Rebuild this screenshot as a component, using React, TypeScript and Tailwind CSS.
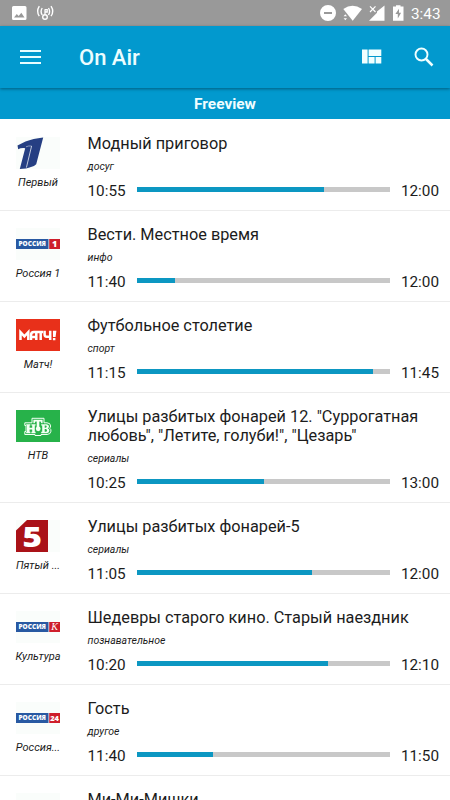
import type { ReactNode } from 'react';

type Programme = {
    channel: string;
    logo: ReactNode;
    title: string;
    genre: string;
    start: string;
    end: string;
    progress: number;
};

function RussiaLogo({ suffix, suffixClass }: { suffix: string; suffixClass: string }) {
    return (
        <div className="w-full h-full bg-[#fafdfb] flex items-center">
            <svg viewBox="0 0 44 10" className="w-11 h-[10px] overflow-visible">
                <rect width="32.5" height="10" fill="#2859a2" />
                <rect x="33.2" width="10.8" height="10" fill="#ce1e2b" />
                <text x="2.5" y="7.4" textLength="27.5" lengthAdjust="spacingAndGlyphs" fontSize="6.8" fontWeight="800" fill="#fff" fontFamily="Open Sans, sans-serif">
                    РОССИЯ
                </text>
                <text x="38.6" y="8.2" textAnchor="middle" fill="#fff" className={suffixClass}>
                    {suffix}
                </text>
            </svg>
        </div>
    );
}

function FirstLogo() {
    return (
        <svg viewBox="0 0 44 32" className="w-full h-full">
            <rect width="44" height="32" fill="#fafdfb" />
            <path d="M1.5 8.6 9.5 4.6Q17 1.5 27.2.5L20.2 27.3Q18 30 13.5 30.6L10 31.4 3.8 32 9.2 11.2Q5 10.8 2.2 12.2Z" fill="#263f83" />
            <path d="M15.6 9 10.4 30.6" fill="none" stroke="#e8edf3" strokeWidth=".8" />
            <path d="M10 9.8Q12.5 8.6 15.6 9" fill="none" stroke="#e8edf3" strokeWidth=".5" />
        </svg>
    );
}

function MatchLogo() {
    return (
        <svg viewBox="0 0 44 32" className="w-full h-full">
            <rect width="44" height="32" fill="#e8301a" />
            <g fill="none" stroke="#fff" strokeWidth="2.5">
                <path d="M4.5 21V13.2L8.4 17.4 12.3 13.2V21" />
                <path d="M15 21V16.2Q15 13 18 13H27M15 18H20.5M20.3 21V13M24.7 21V13" />
                <path d="M28.6 11.8V15.6Q28.6 17.8 30.6 17.8H34M34.2 11.8V21" />
            </g>
            <path d="M36.9 11.7H40.4L39.6 18H37ZM36.9 18.9H39.4V21.2H36.9Z" fill="#fff" />
        </svg>
    );
}

function NtvLogo() {
    return (
        <svg viewBox="0 0 44 32" className="w-full h-full">
            <rect width="44" height="32" fill="#27b24a" />
            <path d="M8.8 12.8H16V8.3H28V12.8H31Q34.6 13 34.6 16 34.6 17.3 33.6 18.2 35.2 19.2 35 21.2 34.6 24.4 31 24.5H25V25.5H19V24.5H8.8V21.5H10V15.5H8.8Z" fill="none" stroke="#f3fff4" strokeWidth="1" />
            <g fill="#f3fff4">
                <path d="M10.2 14.2H14.4V15.6H13.6V17.8H16.2V15.6H15.4V14.2H19.6V15.6H18.8V21.8H19.6V23.2H15.4V21.8H16.2V19.4H13.6V21.8H14.4V23.2H10.2V21.8H11V15.6H10.2Z" />
                <path d="M17.4 9.8H26.6V13.3H25.4L24.6 11.4H23.3V17H20.7V11.4H19.4L18.6 13.3H17.4Z" />
                <path fillRule="evenodd" d="M25.2 14.2H30.6Q33.1 14.4 33 16.4 32.9 17.8 31.7 18.3 33.5 18.8 33.4 20.8 33.2 23 30.6 23.2H25.2V21.8H26.2V15.6H25.2ZM28.7 15.6V17.7H29.7Q30.7 17.6 30.7 16.6 30.7 15.6 29.7 15.6ZM28.7 19.1V21.8H29.8Q31 21.6 31 20.4 31 19.2 29.8 19.1Z" />
                <circle cx="22.2" cy="18.8" r="2.4" />
            </g>
        </svg>
    );
}

function FiveLogo() {
    return (
        <svg viewBox="0 0 44 32" className="w-full h-full overflow-visible">
            <rect width="44" height="32" fill="#fafdfb" />
            <path d="M11 0H32V32H0V10.5Z" fill="#aa1218" />
            <text x="6.5" y="26.5" fontSize="29" textLength="19.5" lengthAdjust="spacingAndGlyphs" fontWeight="800" fill="#fff" fontFamily="Open Sans, sans-serif">
                5
            </text>
        </svg>
    );
}

const programmes: Programme[] = [
    { channel: 'Первый', logo: <FirstLogo />, title: 'Модный приговор', genre: 'досуг', start: '10:55', end: '12:00', progress: 74 },
    { channel: 'Россия 1', logo: <RussiaLogo suffix="1" suffixClass="font-['Open_Sans'] font-extrabold text-[9px]" />, title: 'Вести. Местное время', genre: 'инфо', start: '11:40', end: '12:00', progress: 15 },
    { channel: 'Матч!', logo: <MatchLogo />, title: 'Футбольное столетие', genre: 'спорт', start: '11:15', end: '11:45', progress: 93.5 },
    { channel: 'НТВ', logo: <NtvLogo />, title: 'Улицы разбитых фонарей 12. "Суррогатная любовь", "Летите, голуби!", "Цезарь"', genre: 'сериалы', start: '10:25', end: '13:00', progress: 50.3 },
    { channel: 'Пятый ...', logo: <FiveLogo />, title: 'Улицы разбитых фонарей-5', genre: 'сериалы', start: '11:05', end: '12:00', progress: 69.2 },
    { channel: 'Культура', logo: <RussiaLogo suffix="К" suffixClass="font-['Liberation_Serif'] italic text-[10px]" />, title: 'Шедевры старого кино. Старый наездник', genre: 'познавательное', start: '10:20', end: '12:10', progress: 75.6 },
    { channel: 'Россия...', logo: <RussiaLogo suffix="24" suffixClass="font-['Open_Sans'] font-extrabold text-[7.5px]" />, title: 'Гость', genre: 'другое', start: '11:40', end: '11:50', progress: 30.1 },
    { channel: 'Карусель', logo: <div className="w-full h-full bg-[#fafdfb]" />, title: 'Ми-Ми-Мишки', genre: 'детям', start: '11:30', end: '12:00', progress: 50 },
];

function StatusBar() {
    return (
        <div className="h-[26px] shrink-0 bg-[#999999] flex items-center justify-between pl-3 pr-[9px] text-white">
            <svg viewBox="0 0 44 26" className="w-11 h-[26px]" fill="none">
                <path fillRule="evenodd" d="M1.5 6H13Q14.5 6 14.5 7.5V18.5Q14.5 20 13 20H1.5Q0 20 0 18.5V7.5Q0 6 1.5 6ZM2 17.5H12.5L9.3 12.8 6.7 16 4.8 14Z" fill="#fff" />
                <circle cx="33" cy="17" r="2.3" stroke="#fff" strokeWidth="1.4" />
                <path d="M33 14.6V9.2M33 9.7H35.2V12H33" stroke="#fff" strokeWidth="1.3" />
                <path d="M30.2 8Q28 11.5 30.2 15M27.3 6.2Q24 11.5 27.3 16.2M36.5 8Q38.7 11.5 36.5 15M39 6.2Q42.5 11.5 39 16.2" stroke="#fff" strokeWidth="1.4" />
            </svg>
            <div className="flex items-center">
                <svg viewBox="0 0 86 26" className="w-[86px] h-[26px]" fill="#fff">
                    <path fillRule="evenodd" d="M8 5A8 8 0 1 0 8 21A8 8 0 1 0 8 5ZM4 12.1H12V13.9H4Z" />
                    <path d="M23.3 9Q32.5 2.5 42 9L32.7 20.8Z" />
                    <path d="M25.3 14.3 27 16.3H23.6ZM25.3 20.3 23.6 18.2H27Z" />
                    <path d="M64.5 5.5V20.8H49L57 12.8V11.5Z" />
                    <path d="M50 6.3 55.5 12M55.5 6.3 50 12" fill="none" stroke="#fff" strokeWidth="1.2" />
                    <path fillRule="evenodd" d="M73 6.4H76V5.2H80.5V6.4H83.5V20.8H73ZM79 8.7 75.4 14H77.8V18.6L81.1 12.8H79Z" />
                </svg>
                <span className="ml-[5px] w-[30px] pt-[3px] text-[15.3px] leading-none whitespace-nowrap">3:43</span>
            </div>
        </div>
    );
}

function AppBar() {
    return (
        <header className="relative z-10 h-[62px] shrink-0 bg-[#0299ce] flex items-center pl-5 pr-[16.5px] text-white shadow-[0_1px_3px_rgba(0,0,0,0.4)]">
            <svg viewBox="0 0 21 16" className="w-[21px] h-4">
                <path d="M0 2H21M0 8H21M0 14H21" stroke="#e8fcff" strokeWidth="2" />
            </svg>
            <h1 className="ml-[38px] grow pt-[2px] text-[22px] leading-none font-medium text-[#ecfdff]">On Air</h1>
            <svg viewBox="0 0 20 15" className="w-5 h-[15px] mr-[32px] -mt-[2px]" fill="#f0ffff">
                <path d="M0 .5H5.6V14.5H0ZM6.6 .5H19.3V7H6.6ZM6.6 8H12.6V14.5H6.6ZM13.6 8H19.3V14.5H13.6Z" />
            </svg>
            <svg viewBox="0 0 20 20" className="w-5 h-5" fill="none" stroke="#f0ffff">
                <circle cx="7.5" cy="7.5" r="6" strokeWidth="1.9" />
                <path d="M12 12 18.5 18.5" strokeWidth="2.5" />
            </svg>
        </header>
    );
}

function ProgrammeRow({ item }: { item: Programme }) {
    return (
        <li className="flex shrink-0 border-b border-[#ececec] pl-4 pr-[11px] pt-[17px] pb-[9px]">
            <div className="w-11 shrink-0 mr-[27.5px]">
                <div className="h-8">{item.logo}</div>
                <p className="mt-[7px] -mx-3 text-center text-[11px] leading-[14px] italic whitespace-nowrap">{item.channel}</p>
            </div>
            <div className="grow min-w-0">
                <h3 className="-mt-[3px] text-[16.3px] leading-[19px]">{item.title}</h3>
                <p className="mt-[7px] text-[10.5px] leading-[14px] italic">{item.genre}</p>
                <div className="mt-[7px] flex items-center text-[15.3px] leading-[20px]">
                    <span className="w-[49.5px]">{item.start}</span>
                    <div className="grow h-[5px] bg-[#c8c8c8] -mt-[3px]">
                        <div className="h-full bg-[#0c97c2]" style={{ width: `${item.progress}%` }} />
                    </div>
                    <span className="w-[49.5px] text-right">{item.end}</span>
                </div>
            </div>
        </li>
    );
}

export default function App() {
    return (
        <div className="w-[450px] h-[800px] overflow-hidden flex flex-col bg-white text-[#1c1c1c] font-[Roboto,sans-serif]">
            <StatusBar />
            <AppBar />
            <div className="h-[31px] shrink-0 bg-[#0299ce] flex items-center justify-center text-[#f0fdff] text-[15.4px] font-bold leading-none pt-[2px]">
                Freeview
            </div>
            <ul className="grow min-h-0 overflow-hidden flex flex-col pt-[1px]">
                {programmes.map((item) => (
                    <ProgrammeRow key={item.channel} item={item} />
                ))}
            </ul>
        </div>
    );
}
